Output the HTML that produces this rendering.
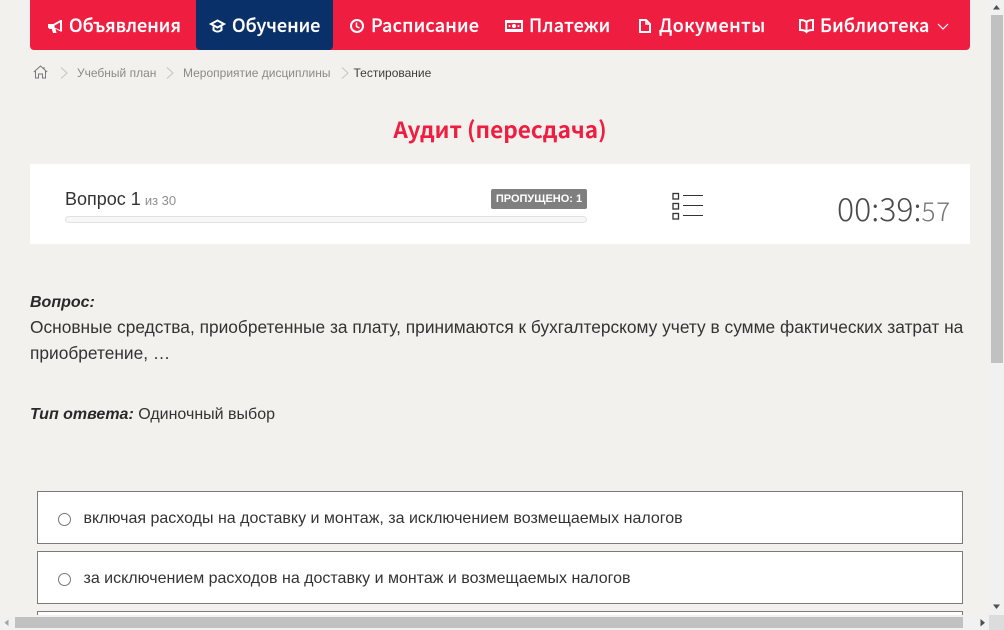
<!DOCTYPE html>
<html lang="ru"><head><meta charset="utf-8"><title>Аудит</title>
<style>
html,body{margin:0;padding:0;width:1004px;height:630px;overflow:hidden;background:#f2f1ed}
body{position:relative;font-family:"Liberation Sans",sans-serif;color:#292929}
.a{position:absolute;white-space:nowrap}
.nav{left:30px;top:0;width:940px;height:50px;background:#ef1e41;border-radius:0 0 4px 4px}
.act{left:196px;top:0;width:137px;height:50px;background:#0a3069;border-radius:0 0 4px 4px}
.n{top:13px;font:500 18px/25px "Noto Sans CJK JP","Noto Sans CJK SC",sans-serif;color:#fff;-webkit-text-stroke:.2px #fff}
.bc{top:66px;font-size:12px;line-height:14px;color:#8a8a8a}
svg{position:absolute;overflow:visible}
.opt{left:37px;width:924px;background:#fff;border:1px solid #7b7b7b}
.ot{left:83.500px;font-size:16px;line-height:20px;color:#333}
.r{left:58px;width:11px;height:11px;border:1px solid #767676;border-radius:50%;background:#fff}
</style></head><body>
<div class="a nav"></div><div class="a act"></div>

<svg style="left:48px;top:19px" width="15" height="14" viewBox="0 0 15 14"><path fill="#fff" fill-rule="evenodd" d="M0 5H5.500L12.500 1H14V12.500H12.500L7.500 9.800 8.500 14H5L3.800 10H1.500L0 8.500zM6.500 6.500V8.500L12 11V3.500z"/></svg>
<div class="a n" style="left:69px">Объявления</div>

<svg style="left:209px;top:19px" width="17" height="14" viewBox="0 0 17 14" fill="none" stroke="#fff" stroke-width="2"><path d="M8.500 1.500 15 5 8.500 8.500 2 5z"/><path d="M4.500 7.500V11c2.500 2 5.500 2 8 0V7.500"/></svg>
<div class="a n" style="left:232px">Обучение</div>

<svg style="left:350px;top:19px" width="14" height="14" viewBox="0 0 14 14" fill="none" stroke="#fff" stroke-width="2"><circle cx="7" cy="7" r="6"/><path d="M6.500 3.500V7.500L9.500 9" stroke-width="1.500"/></svg>
<div class="a n" style="left:371px;letter-spacing:.2px">Расписание</div>

<svg style="left:505px;top:20px" width="18" height="12" viewBox="0 0 18 12"><path fill="#fff" fill-rule="evenodd" d="M0 0h18v12H0zM2 3v6h14V3z"/><circle cx="9" cy="6" r="2" fill="#fff"/><circle cx="4.500" cy="6" r="1" fill="#fff"/><circle cx="13.500" cy="6" r="1" fill="#fff"/></svg>
<div class="a n" style="left:529px;letter-spacing:.3px">Платежи</div>

<svg style="left:639px;top:19px" width="12" height="14" viewBox="0 0 12 14" fill="none" stroke="#fff" stroke-width="2"><path d="M1 1h6l4 4v8H1z"/><path d="M7 1v4h4" stroke-width="1.500"/></svg>
<div class="a n" style="left:659px;letter-spacing:.45px">Документы</div>

<svg style="left:799px;top:19px" width="15" height="14" viewBox="0 0 15 14" fill="none" stroke="#fff" stroke-width="2"><path d="M7.500 3C6 1.500 3 1 1 1v10c2 0 5 0 6.500 2 1.500-2 4.500-2 6.500-2V1C12 1 9 1.500 7.500 3zV12"/></svg>
<div class="a n" style="left:820px;letter-spacing:.2px">Библиотека</div>
<svg style="left:937px;top:23px" width="12" height="7" viewBox="0 0 12 7" fill="none" stroke="#fff" stroke-width="1.200"><path d="M1 1l5 5 5-5"/></svg>

<svg style="left:33px;top:65px" width="15" height="14" viewBox="0 0 15 14" fill="none" stroke="#777" stroke-width="1"><path d="M.8 7 7.500 1l6.700 6M2.500 6v7h3V9h4v4h3V6M11 2v2.500"/></svg>
<svg style="left:60px;top:67px" width="8" height="12" viewBox="0 0 8 12" fill="none" stroke="#c4c4c4"><path d="M1 .5 7 6 1 11.500"/></svg>
<div class="a bc" style="left:77px">Учебный план</div>
<svg style="left:166px;top:67px" width="8" height="12" viewBox="0 0 8 12" fill="none" stroke="#c4c4c4"><path d="M1 .5 7 6 1 11.500"/></svg>
<div class="a bc" style="left:183px">Мероприятие дисциплины</div>
<svg style="left:341px;top:67px" width="8" height="12" viewBox="0 0 8 12" fill="none" stroke="#c4c4c4"><path d="M1 .5 7 6 1 11.500"/></svg>
<div class="a bc" style="left:353.500px;color:#3d3d3d">Тестирование</div>

<div class="a" style="left:30px;width:940px;top:113px;text-align:center;font:700 22.600px/32px 'Noto Sans CJK JP','Noto Sans CJK SC',sans-serif;color:#ef1e41">Аудит (пересдача)</div>

<div class="a" style="left:30px;top:164px;width:940px;height:80px;background:#fff"></div>
<div class="a" style="left:65px;top:187px;font-size:18px;line-height:24px;color:#333">Вопрос 1 <span style="font-size:13px;color:#8f8f8f;margin-left:-1px">из 30</span></div>
<div class="a" style="left:65px;top:216px;width:520px;height:5px;background:#f7f7f7;border:1px solid #e1e1e1;border-radius:4px"></div>
<div class="a" style="left:491px;top:189px;width:96px;height:20px;background:#7f7f7f;border-radius:2px;color:#fff;font-size:11px;font-weight:bold;line-height:21px;text-align:center">ПРОПУЩЕНО: 1</div>
<svg style="left:672px;top:193px" width="32" height="28" viewBox="0 0 32 28" fill="none" stroke="#333"><g stroke-width="1.300"><rect x="1" y=".5" width="5.500" height="5.500"/><rect x="1" y="10.500" width="5.500" height="5.500"/><rect x="1" y="20.500" width="5.500" height="5.500"/></g><path d="M11 2.500h20M11 12.500h20M11 22.500h20"/></svg>
<div class="a" style="left:837px;top:188px;font:200 32px/40px 'Noto Sans CJK JP','Noto Sans CJK SC',sans-serif;color:#4a4a4a">00:39:<span style="font-size:26px;color:#777;letter-spacing:.8px">57</span></div>

<div class="a" style="left:30px;top:293px;font-size:16px;line-height:20px;font-weight:bold;font-style:italic">Вопрос:</div>
<div class="a" style="left:30px;top:314px;font-size:17.330px;line-height:26px;color:#333">Основные средства, приобретенные за плату, принимаются к бухгалтерскому учету в сумме фактических затрат на<br>приобретение, …</div>
<div class="a" style="left:30px;top:405px;font-size:16px;line-height:20px;color:#333"><b style="font-style:italic;color:#292929">Тип ответа:</b> Одиночный выбор</div>

<div class="a opt" style="top:491px;height:51px"></div>
<div class="a r" style="top:513px"></div>
<div class="a ot" style="top:509px">включая расходы на доставку и монтаж, за исключением возмещаемых налогов</div>
<div class="a opt" style="top:551px;height:51px"></div>
<div class="a r" style="top:573px"></div>
<div class="a ot" style="top:569px">за исключением расходов на доставку и монтаж и возмещаемых налогов</div>
<div class="a opt" style="top:611px;height:51px"></div>

<div class="a" style="left:989px;top:0;width:15px;height:630px;background:#f1f1f1"></div>
<div class="a" style="left:0;top:615px;width:1004px;height:15px;background:#f1f1f1"></div>
<div class="a" style="left:989px;top:615px;width:15px;height:15px;background:#dcdcdc"></div>
<div class="a" style="left:991px;top:15px;width:12px;height:348px;background:#c1c1c1"></div>
<div class="a" style="left:15px;top:617px;width:948px;height:11px;background:#c1c1c1"></div>
<svg style="left:0;top:0" width="1004" height="630" fill="#505050"><path d="M993 9.500 996.500 5 1000 9.500zM993 604.500 996.500 609 1000 604.500z" /><path d="M8.500 619.500V626L4.500 622.800z" fill="#a3a3a3"/><path d="M980.500 619V626.500L985 622.800z"/></svg>
</body></html>
